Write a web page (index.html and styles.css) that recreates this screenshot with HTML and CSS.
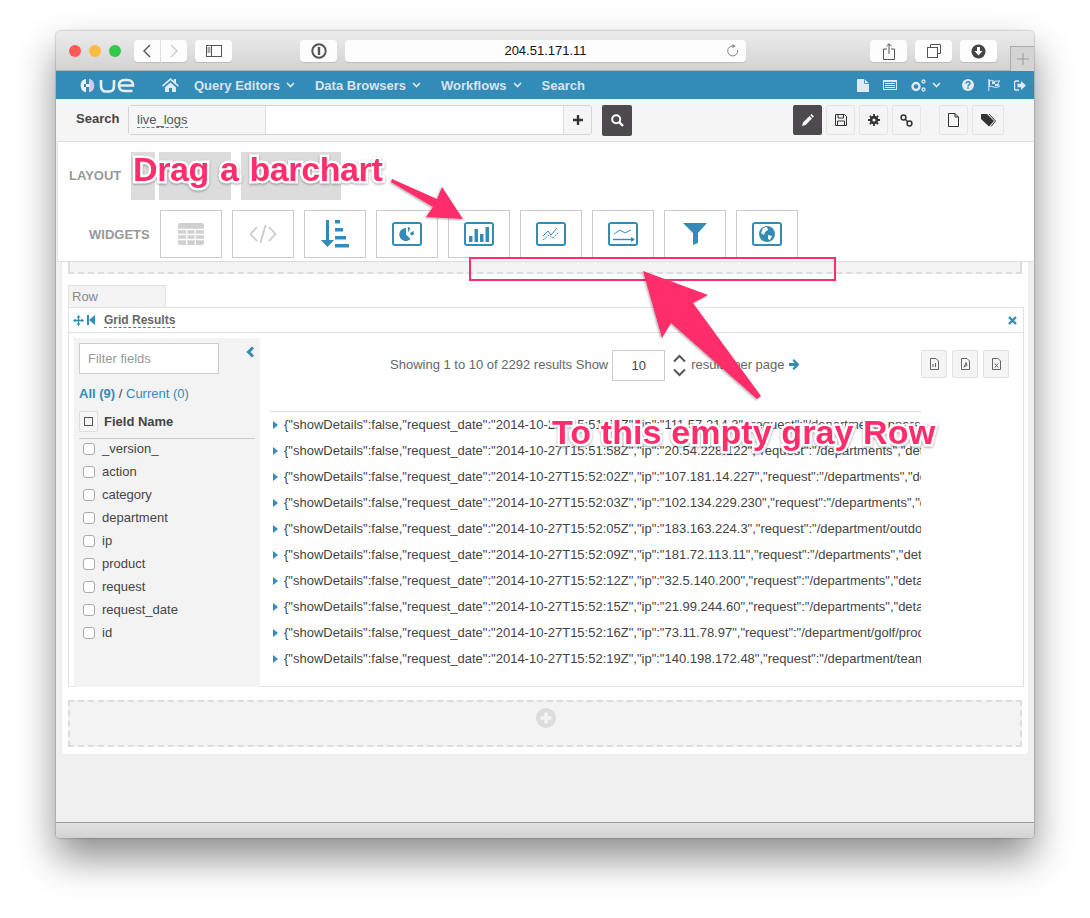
FILE: index.html
```html
<!DOCTYPE html>
<html>
<head>
  <meta charset="utf-8">
  <title>Hue - Search</title>
  <link rel="stylesheet" href="styles.css">
</head>
<body>
<div class="window">

  <div class="safari">
    <div class="lights"><i class="red"></i><i class="yellow"></i><i class="green"></i></div>
    <div class="sbtn back"><svg width="10" height="16" viewBox="0 0 10 16"><path d="M8 2 2 8l6 6" fill="none" stroke="#555" stroke-width="1.4"/></svg></div>
    <div class="sbtn forward"><svg width="10" height="16" viewBox="0 0 10 16"><path d="M2 2l6 6-6 6" fill="none" stroke="#ccc" stroke-width="1.4"/></svg></div>
    <div class="sbtn sidebar-btn"><svg width="16" height="12" viewBox="0 0 16 12"><rect x=".5" y=".5" width="15" height="11" fill="none" stroke="#555"/><path d="M5.500 0v12M1.500 3h3M1.500 5h3M1.500 7h3" stroke="#555" fill="none"/></svg></div>
    <div class="sbtn pass"><svg width="16" height="16" viewBox="0 0 16 16"><circle cx="8" cy="8" r="6.700" fill="none" stroke="#555" stroke-width="2"/><path d="M8 4v8" stroke="#555" stroke-width="2.400"/></svg></div>
    <div class="address">204.51.171.11
      <svg class="reload" width="13" height="13" viewBox="0 0 13 13"><path d="M7.500 2A5 5 0 1 0 11.600 6" fill="none" stroke="#888"/><path d="M6.500 0l3.400 2-3.400 2z" fill="#888"/></svg>
    </div>
    <div class="sbtn share"><svg width="12" height="17" viewBox="0 0 12 17"><path d="M4 6H.5v10.500h11V6H8M6 11V1M3.500 3.200 6 .8l2.500 2.400" fill="none" stroke="#555"/></svg></div>
    <div class="sbtn tabs"><svg width="14" height="14" viewBox="0 0 14 14"><path d="M3.500 3.500v-3h10v9h-3" fill="none" stroke="#555"/><rect x=".5" y="3.500" width="10" height="10" fill="none" stroke="#555"/></svg></div>
    <div class="sbtn download"><svg width="15" height="15" viewBox="0 0 15 15"><circle cx="7.500" cy="7.500" r="7" fill="#444"/><path d="M6 3h3v4h2.500l-4 4.500-4-4.500H6z" fill="#fff"/></svg></div>
    <div class="newtab"><svg width="12" height="12" viewBox="0 0 12 12"><path d="M6 0v12M0 6h12" stroke="#999"/></svg></div>
  </div>

  <nav class="nav">
    <svg class="logo" width="56" height="17" viewBox="0 0 56 17">
      <path d="M7 1.700A7 7 0 0 0 7 15.300V10H5V7h2z" fill="#eef3f7"/>
      <path d="M10 1.700A7 7 0 0 1 10 15.300V10h1V7h-1z" fill="#d5c8ec"/>
      <path d="M7 7h4v3H7z" fill="#eef3f7"/>
      <path d="M22 3v6c0 3.500 2 5.500 5 5.500h3c3 0 5-2 5-5.500V3" fill="none" stroke="#e6eff5" stroke-width="2.600"/>
      <path d="M40 8.500h14c0-3.500-2-5.500-5.500-5.500h-3c-3.500 0-5.500 2-5.500 5.500s2 5.500 5.500 5.500h8" fill="none" stroke="#e6eff5" stroke-width="2.600"/>
    </svg>
    <svg class="home" width="17" height="14" viewBox="0 0 17 14"><path d="M8.500 0 0 7.500l1 1.200 7.500-6.400 7.500 6.400 1-1.200-3-2.600V1h-2v2.100zM3 9.300V14h4v-4h3v4h4V9.300L8.500 4.500z" fill="#dfeaf2"/></svg>
    <a class="nav-item">Query Editors<svg class="chev" width="9" height="6" viewBox="0 0 9 6"><path d="M1 1l3.500 3.500L8 1" fill="none" stroke="#dfeaf2" stroke-width="1.600"/></svg></a>
    <a class="nav-item">Data Browsers<svg class="chev" width="9" height="6" viewBox="0 0 9 6"><path d="M1 1l3.500 3.500L8 1" fill="none" stroke="#dfeaf2" stroke-width="1.600"/></svg></a>
    <a class="nav-item">Workflows<svg class="chev" width="9" height="6" viewBox="0 0 9 6"><path d="M1 1l3.500 3.500L8 1" fill="none" stroke="#dfeaf2" stroke-width="1.600"/></svg></a>
    <a class="nav-item">Search</a>
    <div class="nav-right">
      <svg width="12" height="13" viewBox="0 0 12 13"><path d="M0 0h7.500L12 4.500V13H0z" fill="#dfeaf2"/><path d="M7.500 0v4.500H12" fill="none" stroke="#338bb8" stroke-width=".8"/></svg>
      <svg width="14" height="10" viewBox="0 0 14 10"><path fill="#dfeaf2" fill-rule="evenodd" d="M0 0h14v10H0zm1 2v7h12V2zm1 1h10v1H2zm0 2h10v1H2zm0 2h10v1H2z"/></svg>
      <span class="nav-gears">
        <svg width="15" height="13" viewBox="0 0 15 13"><circle cx="5" cy="7.500" r="3.500" fill="none" stroke="#dfeaf2" stroke-width="2.400"/><circle cx="12.500" cy="2.500" r="1.500" fill="none" stroke="#dfeaf2" stroke-width="1.300"/><circle cx="12.500" cy="10.500" r="1.500" fill="none" stroke="#dfeaf2" stroke-width="1.300"/></svg>
        <svg width="9" height="6" viewBox="0 0 9 6"><path d="M1 1l3.500 3.500L8 1" fill="none" stroke="#dfeaf2" stroke-width="1.600"/></svg>
      </span>
      <svg class="nav-help" width="12" height="12" viewBox="0 0 12 12"><circle cx="6" cy="6" r="6" fill="#dfeaf2"/><path d="M4 4.500C4 3.300 5 2.800 6 2.800s2 .6 2 1.700C8 6 6 5.800 6 7.400" fill="none" stroke="#338bb8" stroke-width="1.400"/><path d="M5.200 8.300h1.600v1.500H5.200z" fill="#338bb8"/></svg>
      <svg width="12" height="12" viewBox="0 0 12 12"><path d="M.8 0v12" stroke="#dfeaf2"/><path d="M1.500 1.500C4 .5 6 3 8 2.300l3.500-.6-1.500 3 1.500 3-3.500.6c-2 .7-4-1.800-6.500-.8z" fill="none" stroke="#dfeaf2"/><path d="M4 2.500h3v2.500H4zM7 5h3v2H7z" fill="#dfeaf2"/></svg>
      <svg width="12" height="11" viewBox="0 0 12 11"><path d="M5 1H2Q.5 1 .5 2.500v6Q.5 10 2 10h3" fill="none" stroke="#dfeaf2" stroke-width="1.400"/><path d="M3.500 3.800h3.500V1l5 4.500-5 4.500V7.200H3.500z" fill="#dfeaf2"/></svg>
    </div>
  </nav>

  <div class="searchbar">
    <span class="search-label">Search</span>
    <div class="search-box">
      <div class="search-tag"><span class="dashed">live_logs</span></div>
      <div class="search-input"></div>
      <div class="search-add"><svg width="10" height="10" viewBox="0 0 10 10"><path d="M5 0v10M0 5h10" stroke="#333" stroke-width="2.400"/></svg></div>
    </div>
    <div class="search-go"><svg width="13" height="13" viewBox="0 0 13 13"><circle cx="5.200" cy="5.200" r="4" fill="none" stroke="#fff" stroke-width="2"/><path d="M8.200 8.200 12 12" stroke="#fff" stroke-width="2.400"/></svg></div>
    <div class="tools">
      <div class="tool active"><svg width="12" height="12" viewBox="0 0 12 12"><path d="M0 12l1-3.500 6.500-6.500 2.500 2.500L3.500 11zM8.300 1.200 9.500 0 12 2.500 10.800 3.700z" fill="#fff"/></svg></div>
      <div class="tool"><svg width="12" height="12" viewBox="0 0 12 12"><path d="M.5.500h9l2 2v9H.5zM3 .5v3.500h5.500V.5M2.500 11.500V7h7v4.500" fill="none" stroke="#333"/></svg></div>
      <div class="tool"><svg width="12" height="12" viewBox="0 0 12 12"><path d="M6 0v12M0 6h12M1.800 1.800l8.400 8.400M10.200 1.800l-8.400 8.400" stroke="#333" stroke-width="1.800"/><circle cx="6" cy="6" r="4.200" fill="#333"/><circle cx="6" cy="6" r="1.600" fill="#f5f5f5"/></svg></div>
      <div class="tool"><svg width="13" height="13" viewBox="0 0 13 13"><circle cx="3.500" cy="3.500" r="2.400" fill="none" stroke="#333" stroke-width="1.500"/><circle cx="9.500" cy="9.500" r="2.400" fill="none" stroke="#333" stroke-width="1.500"/><path d="M5 5l3 3" stroke="#333" stroke-width="1.500"/></svg></div>
      <div class="tool doc"><svg width="11" height="14" viewBox="0 0 11 14"><path d="M.5.500h6.500l3.500 3.500v9.500H.5zM7 .5V4h3.500" fill="none" stroke="#333"/></svg></div>
      <div class="tool tags"><svg width="15" height="13" viewBox="0 0 15 13"><path d="M0 0h6l7 7-5 5.500L0 5z" fill="#333"/><path d="M8 0l6.500 7-4.500 5.500" fill="none" stroke="#333"/></svg></div>
    </div>
  </div>

  <div class="page">
    <div class="panel">
      <div class="panel-row layout-row">
        <span class="panel-label">LAYOUT</span>
        <i class="col-one"></i><i class="col-two"></i><i class="col-three"></i>
      </div>
      <div class="panel-row widget-row">
        <span class="panel-label">WIDGETS</span>
        <div class="widget-btn"><svg width="26" height="22" viewBox="0 0 26 22"><rect width="26" height="22" rx="2" fill="#d0d0d0"/><path d="M0 6.500h26M0 11.500h26M0 16.500h26M8.700 6v16M17.300 6v16" stroke="#fff" stroke-width="1.300"/></svg></div>
        <div class="widget-btn"><svg width="28" height="22" viewBox="0 0 28 22"><path d="M8 4 1.500 11 8 18M20 4l6.500 7-6.500 7M16.500 2l-5 18" fill="none" stroke="#ccc" stroke-width="1.800"/></svg></div>
        <div class="widget-btn"><svg width="28" height="28" viewBox="0 0 28 28"><path d="M5 0h3v20h5l-6.500 7L0 20h5z" fill="#338bb8"/><path d="M14 0h5v3.500h-5zM14 8h8v3.500h-8zM14 16h11v3.500H14zM14 24h14v3.500H14z" fill="#338bb8"/></svg></div>
        <div class="widget-btn"><svg width="30" height="24" viewBox="0 0 30 24"><rect x="1" y="1" width="28" height="22" rx="2" fill="none" stroke="#338bb8" stroke-width="2"/><path d="M14 6v6.500l4.500 4.500A6.500 6.500 0 1 1 14 6z" fill="#338bb8"/><path d="M16 5l2.500 1-2.500 4.500zM18 11l3.500-2 .5 3.500-3 1z" fill="#338bb8"/></svg></div>
        <div class="widget-btn"><svg width="30" height="24" viewBox="0 0 30 24"><rect x="1" y="1" width="28" height="22" rx="2" fill="none" stroke="#338bb8" stroke-width="2"/><path d="M5 14h3.500v6H5zM10.500 7H14v13h-3.500zM16 12h3.500v8H16zM21.500 5H25v15h-3.500z" fill="#338bb8"/></svg></div>
        <div class="widget-btn"><svg width="30" height="24" viewBox="0 0 30 24"><rect x="1" y="1" width="28" height="22" rx="2" fill="none" stroke="#338bb8" stroke-width="2"/><path d="M7 14l5-5 3 4 6-7" fill="none" stroke="#338bb8"/><path d="M7 18l6-5 4 3 6-6" fill="none" stroke="#338bb8" stroke-dasharray="2 1"/></svg></div>
        <div class="widget-btn"><svg width="30" height="24" viewBox="0 0 30 24"><rect x="1" y="1" width="28" height="22" rx="2" fill="none" stroke="#338bb8" stroke-width="2"/><path d="M6 12l6-4 5 3 6-3" fill="none" stroke="#338bb8"/><path d="M5 17.500h19" stroke="#338bb8" stroke-width="1.400"/><path d="M23 15l4 2.500-4 2.500z" fill="#338bb8"/></svg></div>
        <div class="widget-btn"><svg width="24" height="22" viewBox="0 0 24 22"><path d="M0 0h24L15 10v10l-5 2V10z" fill="#338bb8"/></svg></div>
        <div class="widget-btn"><svg width="30" height="24" viewBox="0 0 30 24"><rect x="1" y="1" width="28" height="22" rx="2" fill="none" stroke="#338bb8" stroke-width="2"/><circle cx="15" cy="12" r="8" fill="#338bb8"/><path d="M11 6l4-1 1 3-3 2-1 3-3-2zM16 13l4 1-2 4-2-1z" fill="#fff"/></svg></div>
      </div>
    </div>

    <div class="sheet">
      <div class="empty-top"></div>
      <div class="row-tab">Row</div>
      <div class="card">
        <div class="card-head">
          <svg width="11" height="11" viewBox="0 0 11 11"><path d="M5.500 0 7.500 2.500h-1.300V4.800h2.300V3.500L11 5.500 8.500 7.500V6.200H6.200v2.300h1.300L5.500 11 3.500 8.500h1.300V6.200H2.500v1.300L0 5.500 2.500 3.500v1.300h2.300V2.500H3.500z" fill="#338bb8"/></svg>
          <svg class="head-back" width="8" height="10" viewBox="0 0 8 10"><path d="M0 0h2v10H0zM8 0v10L2 5z" fill="#338bb8"/></svg>
          <span class="card-title">Grid Results</span>
          <svg class="head-close" width="9" height="9" viewBox="0 0 9 9"><path d="M1 1l7 7M8 1 1 8" stroke="#338bb8" stroke-width="2.400"/></svg>
        </div>
        <div class="card-body">
          <aside class="fields">
            <div class="filter-line">
              <div class="filter">Filter fields</div>
              <svg class="collapse" width="9" height="12" viewBox="0 0 9 12"><path d="M7 1.500 2.500 6 7 10.500" fill="none" stroke="#338bb8" stroke-width="3"/></svg>
            </div>
            <div class="field-tabs"><b>All (9)</b> <span>/</span> Current (0)</div>
            <div class="field-head"><span class="all-box"><i></i></span>Field Name</div>
            <ul class="field-list">
              <li><i></i>_version_</li>
              <li><i></i>action</li>
              <li><i></i>category</li>
              <li><i></i>department</li>
              <li><i></i>ip</li>
              <li><i></i>product</li>
              <li><i></i>request</li>
              <li><i></i>request_date</li>
              <li><i></i>id</li>
            </ul>
          </aside>
          <section class="results">
            <div class="pager">
              <span class="pager-text">Showing 1 to 10 of 2292 results Show</span>
              <span class="page-size">10</span>
              <svg class="spin" width="13" height="23" viewBox="0 0 13 23"><path d="M1 7.500 6.500 2 12 7.500M1 15.500 6.500 21 12 15.500" fill="none" stroke="#555" stroke-width="2"/></svg>
              <span class="pager-text">results per page</span>
              <svg class="next" width="11" height="11" viewBox="0 0 11 11"><path d="M0 4h5.500L3.500 1.500 5 0l5.500 5.500L5 11 3.500 9.500l2-2.500H0z" fill="#338bb8"/></svg>
              <div class="exports">
                <div class="export"><svg width="9" height="12" viewBox="0 0 9 12"><path d="M.5.500h5.500l2.500 2.500v8.500h-8zM3 6v3M5.500 5v4" fill="none" stroke="#555" stroke-width=".9"/></svg></div>
                <div class="export"><svg width="9" height="12" viewBox="0 0 9 12"><path d="M.5.500h5.500l2.500 2.500v8.500h-8zM3 9.500 5 4.500l1 3-3 1" fill="none" stroke="#555" stroke-width=".9"/></svg></div>
                <div class="export"><svg width="9" height="12" viewBox="0 0 9 12"><path d="M.5.500h5.500l2.500 2.500v8.500h-8zM2.800 5.500l3.400 4M6.200 5.500l-3.400 4" fill="none" stroke="#555" stroke-width=".9"/></svg></div>
              </div>
            </div>
            <div class="log">
              <div class="log-row">{"showDetails":false,"request_date":"2014-10-27T15:51:56Z","ip":"111.57.214.3","request":"/department/apparel/products"}</div>
              <div class="log-row">{"showDetails":false,"request_date":"2014-10-27T15:51:58Z","ip":"20.54.228.122","request":"/departments","detail":""}</div>
              <div class="log-row">{"showDetails":false,"request_date":"2014-10-27T15:52:02Z","ip":"107.181.14.227","request":"/departments","detail":""}</div>
              <div class="log-row">{"showDetails":false,"request_date":"2014-10-27T15:52:03Z","ip":"102.134.229.230","request":"/departments","detail":""}</div>
              <div class="log-row">{"showDetails":false,"request_date":"2014-10-27T15:52:05Z","ip":"183.163.224.3","request":"/department/outdoors/products"}</div>
              <div class="log-row">{"showDetails":false,"request_date":"2014-10-27T15:52:09Z","ip":"181.72.113.11","request":"/departments","detail":""}</div>
              <div class="log-row">{"showDetails":false,"request_date":"2014-10-27T15:52:12Z","ip":"32.5.140.200","request":"/departments","detail":""}</div>
              <div class="log-row">{"showDetails":false,"request_date":"2014-10-27T15:52:15Z","ip":"21.99.244.60","request":"/departments","detail":""}</div>
              <div class="log-row">{"showDetails":false,"request_date":"2014-10-27T15:52:16Z","ip":"73.11.78.97","request":"/department/golf/products"}</div>
              <div class="log-row">{"showDetails":false,"request_date":"2014-10-27T15:52:19Z","ip":"140.198.172.48","request":"/department/team/products"}</div>
            </div>
          </section>
        </div>
      </div>
      <div class="empty-row">
        <svg width="20" height="20" viewBox="0 0 20 20"><circle cx="10" cy="10" r="10" fill="#dcdcdc"/><path d="M10 4.500v11M4.500 10h11" stroke="#f3f3f3" stroke-width="3.600"/></svg>
      </div>
    </div>
  </div>

  <div class="statusbar"></div>

  <!-- annotations drawn on top of the screenshot -->
  <div class="note-box"></div>
  <svg class="arrows" width="978" height="807" viewBox="56 31 978 807">
    <defs><filter id="soft"><feDropShadow dx="-1" dy="1" stdDeviation="1.200" flood-color="#000" flood-opacity=".35"/></filter></defs>
    <path filter="url(#soft)" fill="#ff2d6b" d="M392 179 437 199 442 187 463 219 426 217 433 207 391 182z"/>
    <path filter="url(#soft)" fill="#ff2d6b" d="M643 271 708 295 693 303 761 396 757 399 671 323 662 338z"/>
  </svg>
  <div class="note note-drag">Drag a barchart</div>
  <div class="note note-row">To this empty gray Row</div>
</div>
</body>
</html>
```

FILE: styles.css
```css
html, body { margin: 0; padding: 0; background: #fff; }
body {
  padding: 31px 56px 0;
  height: 887px;
  overflow: hidden;
  font: 13px "Liberation Sans", Arial, sans-serif;
  color: #444;
}
i { display: block; }
ul { list-style: none; margin: 0; padding: 0; }

.window {
  position: relative;
  width: 978px;
  height: 807px;
  display: flex;
  flex-direction: column;
  border-radius: 5px 5px 4px 4px;
  box-shadow: 0 20px 38px rgba(0,0,0,.45), 0 0 2px rgba(0,0,0,.45);
}

/* browser chrome */
.safari {
  height: 40px;
  flex: none;
  display: flex;
  align-items: flex-start;
  padding-top: 9px;
  box-sizing: border-box;
  background: linear-gradient(#ececec, #d2d2d2);
  border-bottom: 1px solid #b5b5b5;
  border-radius: 5px 5px 0 0;
  position: relative;
}
.lights { display: flex; gap: 8px; margin: 5px 0 0 13px; width: 65px; }
.lights i { width: 12px; height: 12px; border-radius: 50%; }
.red { background: #fc5b57; }
.yellow { background: #fdbc40; }
.green { background: #34c84a; }
.sbtn {
  height: 22px;
  width: 37px;
  display: flex;
  align-items: center;
  justify-content: center;
  background: #fdfdfd;
  border-radius: 4px;
  box-shadow: 0 1px 0 #bdbdbd;
}
.back { width: 26px; border-radius: 4px 0 0 4px; }
.forward { width: 26px; margin-left: 1px; border-radius: 0 4px 4px 0; }
.sidebar-btn { margin-left: 8px; }
.pass { margin-left: 68px; }
.address {
  width: 401px;
  height: 22px;
  margin-left: 8px;
  background: #fdfdfd;
  border-radius: 4px;
  box-shadow: 0 1px 0 #bdbdbd;
  text-align: center;
  line-height: 22px;
  font-size: 13px;
  color: #111;
  position: relative;
}
.reload { position: absolute; right: 7px; top: 4px; }
.share { margin-left: 124px; }
.tabs, .download { margin-left: 8px; }
.newtab {
  margin: 6px 0 0 13px;
  width: 24px;
  height: 25px;
  display: flex;
  align-items: center;
  justify-content: center;
  background: #d4d4d4;
  border: 1px solid #aaa;
  border-width: 1px 0 0 1px;
  box-sizing: border-box;
}

/* hue nav */
.nav {
  height: 28px;
  flex: none;
  display: flex;
  align-items: center;
  background: #338bb8;
  color: #d5e6f0;
  font-weight: bold;
  font-size: 13px;
  padding-left: 23px;
}
.home { margin-left: 27px; }
.logo { flex: none; }
.nav-item { display: flex; align-items: center; margin-left: 15px; margin-right: 5px; white-space: nowrap; }
.chev { margin-left: 6px; }
.nav-right { display: flex; align-items: center; gap: 14px; margin-left: auto; margin-right: 8px; }
.nav-gears { display: flex; align-items: center; gap: 6px; }
.nav-help { margin-left: 7px; }

.searchbar {
  height: 42px;
  flex: none;
  box-sizing: border-box;
  display: flex;
  align-items: flex-start;
  padding: 6px 0 0 20px;
  background: #f5f5f5;
}
.search-label { font-weight: bold; color: #444; line-height: 28px; width: 52px; }
.search-box {
  width: 464px;
  height: 30px;
  display: flex;
  box-sizing: border-box;
  border: 1px solid #d5d5d5;
  border-radius: 3px;
}
.search-tag { width: 137px; background: #f6f6f6; padding: 6px 0 0 8px; box-sizing: border-box; border-right: 1px solid #ddd; color: #555; }
.search-input { flex: 1; background: #fff; border-right: 1px solid #ddd; }
.search-add { width: 27px; display: flex; align-items: center; justify-content: center; }
.dashed { border-bottom: 1px dashed #338bb8; }
.search-go {
  width: 30px;
  height: 31px;
  margin-left: 10px;
  display: flex;
  align-items: center;
  justify-content: center;
  background: #4d4a4d;
  border-radius: 2px;
}
.tools { display: flex; gap: 4px; margin-left: 161px; }
.tool {
  width: 29px;
  height: 30px;
  box-sizing: border-box;
  display: flex;
  align-items: center;
  justify-content: center;
  border: 1px solid #e6e6e6;
  border-radius: 2px;
}
.tool.active { background: #4d4a4d; border-color: #4d4a4d; }
.tool.doc { margin-left: 14px; }
.tool.tags { width: 32px; }

/* page body */
.page {
  flex: 1;
  position: relative;
  background: #f0f0f0;
  display: flex;
  flex-direction: column;
}
.panel {
  height: 121px;
  flex: none;
  box-sizing: border-box;
  margin-left: 1px;
  background: #fff;
  border-top: 1px solid #ddd;
  border-bottom: 1px solid #ddd;
  border-left: 1px solid #e4e4e4;
  border-radius: 0 0 3px 3px;
}
.panel-row { display: flex; }
.panel-label { font-size: 13px; font-weight: bold; color: #999; }
.layout-row { height: 58px; padding: 10px 0 0 11px; }
.layout-row .panel-label { margin: 16px 10px 0 0; width: 52px; }
.layout-row i { height: 48px; background: #dcdcdc; }
.col-one { width: 24px; margin-right: 4px; }
.col-two { width: 72px; margin-right: 10px; }
.col-three { width: 100px; }
.widget-row { gap: 10px; padding-left: 31px; }
.widget-row .panel-label { width: 61px; margin: 17px 0 0 0; white-space: nowrap; }
.widget-btn {
  width: 62px;
  height: 48px;
  box-sizing: border-box;
  display: flex;
  align-items: center;
  justify-content: center;
  border: 1px solid #ccc;
}

.sheet {
  margin: 0 6px 0 6px;
  height: 492px;
  padding: 0 6px;
  box-sizing: border-box;
  background: #fff;
  border-radius: 0 0 3px 3px;
}
.empty-top {
  width: 954px;
  height: 12px;
  box-sizing: border-box;
  background: #f3f3f3;
  border: 2px dashed #ddd;
  border-top: 0;
}
.row-tab {
  width: 98px;
  height: 22px;
  margin-top: 11px;
  box-sizing: border-box;
  padding: 3px 0 0 3px;
  font-size: 13px;
  color: #888;
  background: #f3f3f3;
  border: 1px solid #e2e2e2;
  border-bottom: 0;
}
.card { width: 956px; height: 380px; box-sizing: border-box; border: 1px solid #e2e2e2; }
.card-head {
  height: 25px;
  box-sizing: border-box;
  display: flex;
  align-items: center;
  padding: 0 6px 0 4px;
  border-bottom: 1px solid #e2e2e2;
}
.head-back { margin-left: 3px; }
.card-title { margin-left: 9px; font-size: 12px; font-weight: bold; color: #666; border-bottom: 1px dashed #338bb8; }
.head-close { margin-left: auto; }
.card-body { display: flex; padding-top: 5px; height: 349px; }
.fields { width: 186px; margin-left: 5px; background: #f3f3f3; flex: none; box-sizing: border-box; padding: 5px 5px 0; }
.filter-line { display: flex; }
.filter {
  width: 141px;
  height: 31px;
  box-sizing: border-box;
  padding: 7px 0 0 8px;
  background: #fff;
  border: 1px solid #ccc;
  color: #999;
}
.collapse { margin: 3px 0 0 27px; }
.field-tabs { margin-top: 12px; color: #338bb8; line-height: 16px; }
.field-tabs span { color: #444; }
.field-head {
  display: flex;
  align-items: center;
  margin-top: 8px;
  height: 29px;
  box-sizing: border-box;
  padding-bottom: 5px;
  font-weight: bold;
  color: #444;
  border-bottom: 1px solid #ccc;
}
.all-box {
  width: 19px;
  height: 21px;
  margin-right: 6px;
  box-sizing: border-box;
  display: flex;
  align-items: center;
  justify-content: center;
  background: #f7f7f7;
  border: 1px solid #ddd;
  border-radius: 2px;
}
.all-box i { width: 7px; height: 7px; border: 1px solid #555; }
.field-list { margin-top: -2px; }
.field-list li { display: flex; align-items: center; height: 23px; color: #444; }
.field-list li i {
  width: 12px;
  height: 12px;
  margin: 0 7px 0 4px;
  background: #fff;
  border: 1px solid #aaa;
  border-radius: 3px;
  box-sizing: border-box;
}

.results { flex: 1; padding-left: 10px; min-width: 0; }
.pager { display: flex; align-items: flex-start; height: 74px; border-bottom: 1px solid #ddd; width: 651px; position: relative; padding-left: 120px; box-sizing: border-box; }
.pager-text { margin-top: 19px; color: #666; font-size: 13px; white-space: nowrap; }
.page-size {
  width: 53px;
  height: 31px;
  margin: 12px 0 0 4px;
  box-sizing: border-box;
  border: 1px solid #ccc;
  text-align: center;
  line-height: 29px;
  color: #444;
}
.spin { margin: 16px 5px 0 8px; }
.next { margin: 21px 0 0 4px; }
.exports { position: absolute; left: 651px; top: 12px; display: flex; gap: 5px; }
.export {
  width: 26px;
  height: 28px;
  box-sizing: border-box;
  display: flex;
  align-items: center;
  justify-content: center;
  background: #f5f5f5;
  border: 1px solid #e2e2e2;
  border-radius: 2px;
}
.log { width: 651px; }
.log-row {
  position: relative;
  height: 26px;
  line-height: 26px;
  padding-left: 14px;
  overflow: hidden;
  white-space: nowrap;
  font-size: 13px;
  color: #444;
}
.log-row::before {
  content: "";
  position: absolute;
  left: 3px;
  top: 9px;
  border-left: 5px solid #338bb8;
  border-top: 4px solid transparent;
  border-bottom: 4px solid transparent;
}
.empty-row {
  width: 954px;
  height: 47px;
  margin-top: 13px;
  box-sizing: border-box;
  display: flex;
  justify-content: center;
  padding-top: 6px;
  background: #f3f3f3;
  border: 2px dashed #ddd;
}
.empty-row svg { margin-left: 2px; }

.statusbar {
  height: 16px;
  flex: none;
  box-sizing: border-box;
  background: linear-gradient(#e2e2e2, #d2d2d2);
  border-top: 1px solid #9a9a9a;
  border-radius: 0 0 4px 4px;
}

/* annotations */
.note-box {
  position: absolute;
  left: 413px;
  top: 226px;
  width: 367px;
  height: 24px;
  box-sizing: border-box;
  border: 2px solid #ff2d6b;
}
.arrows { position: absolute; left: 0; top: 0; pointer-events: none; }
.note {
  position: absolute;
  font-weight: bold;
  color: #ff2d6b;
  white-space: nowrap;
  -webkit-text-stroke: 5px #fff;
  paint-order: stroke fill;
  filter: drop-shadow(0 1px 1px rgba(0,0,0,.35));
}
.note-drag { left: 77px; top: 118px; font-size: 34px; line-height: 40px; letter-spacing: -.4px; word-spacing: 2px; }
.note-row { left: 496px; top: 380px; font-size: 34px; line-height: 42px; letter-spacing: .1px; }
```
